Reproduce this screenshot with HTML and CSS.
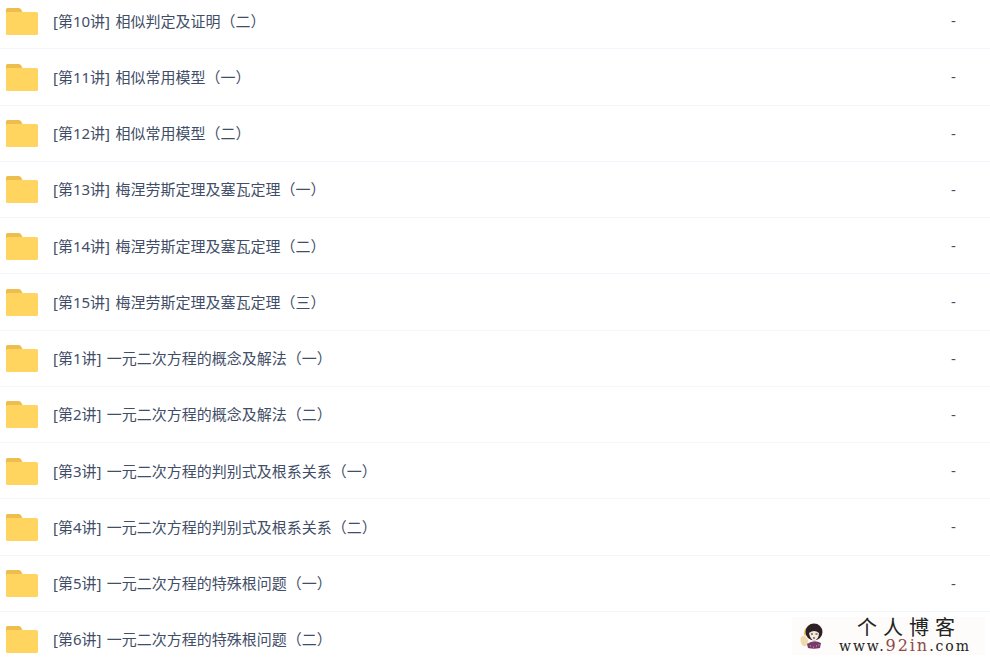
FILE: index.html
```html
<!DOCTYPE html>
<html>
<head>
    <meta charset="utf-8">
    <title>文件列表</title>
    <link rel="stylesheet" href="styles.css">
</head>
<body>
    <svg class="icon-defs" width="0" height="0">
        <symbol id="folder" viewBox="0 0 32 27">
            <path d="M0 1.500A1.500 1.500 0 0 1 1.500 0H12.500Q14 0 15 1.200L16.500 4V12H0Z" fill="#eebd4f"/>
            <path d="M0 5.500Q0 4 1.500 4H30.500Q32 4 32 5.500V25.500Q32 27 30.500 27H1.500Q0 27 0 25.500Z" fill="#ffd55f"/>
        </symbol>
    </svg>
    <div class="file-list">
        <div class="file-row">
            <svg class="folder"><use href="#folder"/></svg>
            <div class="file-name">[第10讲] 相似判定及证明（二）</div>
            <div class="file-size">-</div>
        </div>
        <div class="file-row">
            <svg class="folder"><use href="#folder"/></svg>
            <div class="file-name">[第11讲] 相似常用模型（一）</div>
            <div class="file-size">-</div>
        </div>
        <div class="file-row">
            <svg class="folder"><use href="#folder"/></svg>
            <div class="file-name">[第12讲] 相似常用模型（二）</div>
            <div class="file-size">-</div>
        </div>
        <div class="file-row">
            <svg class="folder"><use href="#folder"/></svg>
            <div class="file-name">[第13讲] 梅涅劳斯定理及塞瓦定理（一）</div>
            <div class="file-size">-</div>
        </div>
        <div class="file-row">
            <svg class="folder"><use href="#folder"/></svg>
            <div class="file-name">[第14讲] 梅涅劳斯定理及塞瓦定理（二）</div>
            <div class="file-size">-</div>
        </div>
        <div class="file-row">
            <svg class="folder"><use href="#folder"/></svg>
            <div class="file-name">[第15讲] 梅涅劳斯定理及塞瓦定理（三）</div>
            <div class="file-size">-</div>
        </div>
        <div class="file-row">
            <svg class="folder"><use href="#folder"/></svg>
            <div class="file-name">[第1讲] 一元二次方程的概念及解法（一）</div>
            <div class="file-size">-</div>
        </div>
        <div class="file-row">
            <svg class="folder"><use href="#folder"/></svg>
            <div class="file-name">[第2讲] 一元二次方程的概念及解法（二）</div>
            <div class="file-size">-</div>
        </div>
        <div class="file-row">
            <svg class="folder"><use href="#folder"/></svg>
            <div class="file-name">[第3讲] 一元二次方程的判别式及根系关系（一）</div>
            <div class="file-size">-</div>
        </div>
        <div class="file-row">
            <svg class="folder"><use href="#folder"/></svg>
            <div class="file-name">[第4讲] 一元二次方程的判别式及根系关系（二）</div>
            <div class="file-size">-</div>
        </div>
        <div class="file-row">
            <svg class="folder"><use href="#folder"/></svg>
            <div class="file-name">[第5讲] 一元二次方程的特殊根问题（一）</div>
            <div class="file-size">-</div>
        </div>
        <div class="file-row">
            <svg class="folder"><use href="#folder"/></svg>
            <div class="file-name">[第6讲] 一元二次方程的特殊根问题（二）</div>
            <div class="file-size"></div>
        </div>
    </div>
    <div class="watermark">
        <svg class="avatar" viewBox="0 0 24 26">
            <path d="M4 12A10 10 0 0 1 14 1L14 6Q8 7 7 13Z" fill="#e6c25a"/>
            <circle cx="14" cy="9" r="8.500" fill="#2c2226"/>
            <path d="M9 10Q14 6 19 10Q19 16 14 18Q10 16 9 10Z" fill="#f6eadb"/>
            <path d="M11 11H13M15.500 11H17.500M13 15H15" stroke="#2c2226"/>
            <path d="M0.500 15Q3 11 6 14Q9 17 8 21Q5 25 2 22Q0 19 0.500 15Z" fill="#f0d9ae"/>
            <path d="M7 21Q14 16 21 20L20 25Q14 26.500 8 25Z" fill="#7a3a68"/>
            <path d="M10 23H10.800M13 24H13.800M16 23H16.800M18.500 22H19.300" stroke="#e8c9d8"/>
        </svg>
        <div class="watermark-text">
            <div class="watermark-title">个人博客</div>
            <div class="watermark-url">www.<span class="url-accent">92in</span>.com</div>
        </div>
    </div>
</body>
</html>
```

FILE: styles.css
```css
html, body {
    height: 100%;
}

body {
    background-color: #fff;
    color: #424e67;
    font-family: "Noto Sans", "Noto Sans CJK SC", sans-serif;
    font-size: 15px;
    margin: 0;
    overflow: hidden;
}

.icon-defs {
    display: block;
}

.file-list {
    margin-top: -6.9px;
}

.file-row {
    align-items: center;
    border-bottom: 1px solid #f2f6fd;
    box-sizing: border-box;
    display: flex;
    height: 56.25px;
    padding-left: 6px;
}

.folder {
    flex: none;
    height: 27px;
    margin-right: 15px;
    margin-top: 1px;
    width: 32px;
}

.file-name {
    flex: 1;
    padding-bottom: 1px;
    word-spacing: 1.5px;
}

.file-size {
    padding-bottom: 1px;
    width: 39px;
}

.watermark {
    align-items: center;
    background-color: #fdfcfa;
    bottom: 3px;
    display: flex;
    height: 38px;
    padding-left: 8px;
    position: absolute;
    right: 5px;
    width: 185px;
}

.avatar {
    flex: none;
    height: 26px;
    width: 24px;
}

.watermark-text {
    color: #222;
    font-family: "DejaVu Serif", "Noto Sans CJK SC", serif;
    margin-left: 15px;
}

.watermark-title {
    font-size: 20px;
    letter-spacing: 6px;
    line-height: 20px;
    margin-left: 18px;
}

.watermark-url {
    font-size: 14px;
    letter-spacing: 1.95px;
    line-height: 16px;
    white-space: nowrap;
}

.url-accent {
    color: #8c4a4a;
    font-size: 16px;
}
```
